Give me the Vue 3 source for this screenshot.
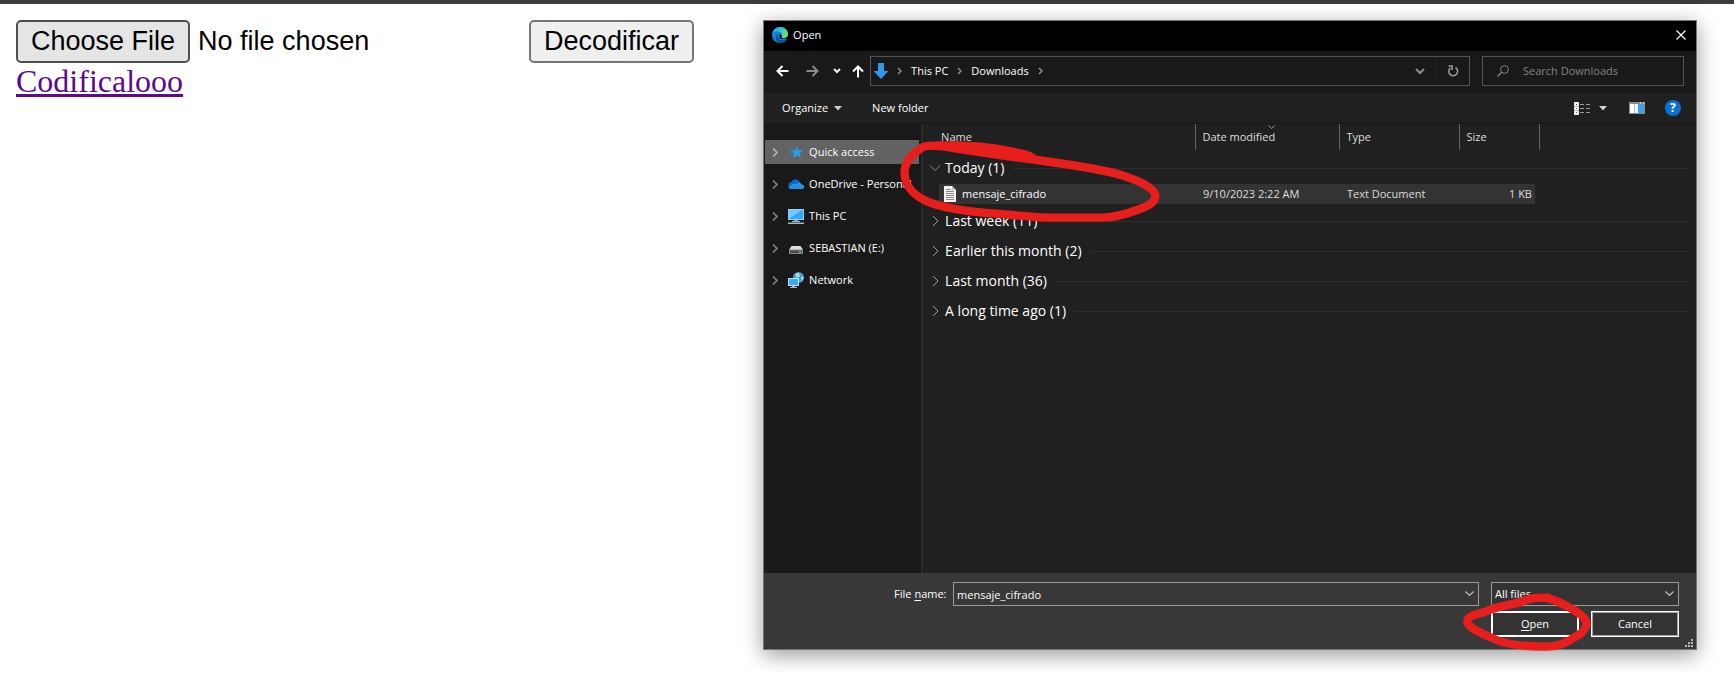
<script setup>
import { ref } from 'vue'

const fileName = ref('mensaje_cifrado')
const fileType = ref('All files')
const search = ref('')

const places = [
  { name: 'Quick access', icon: 'star', active: true },
  { name: 'OneDrive - Personal', icon: 'cloud' },
  { name: 'This PC', icon: 'pc' },
  { name: 'SEBASTIAN (E:)', icon: 'drive' },
  { name: 'Network', icon: 'network' }
]

const groups = [
  {
    name: 'Today (1)',
    open: true,
    files: [{ name: 'mensaje_cifrado', date: '9/10/2023 2:22 AM', type: 'Text Document', size: '1 KB' }]
  },
  { name: 'Last week (11)', files: [] },
  { name: 'Earlier this month (2)', files: [] },
  { name: 'Last month (36)', files: [] },
  { name: 'A long time ago (1)', files: [] }
]
</script>

<template>
  <div class="page">
    <div class="topbar"></div>
    <main class="content">
      <section class="decoder">
        <div class="controls">
          <input class="picker" type="file" aria-label="Archivo cifrado" />
          <button class="decode" type="button">Decodificar</button>
        </div>
        <a class="link" href="#">Codificalooo</a>
      </section>

      <section class="dialog" role="dialog" aria-label="Open">
        <header class="titlebar">
          <svg class="edge" viewBox="0 0 16 16" width="16" height="16">
            <defs>
              <linearGradient id="edgeTop" x1="0" y1="0" x2="1" y2="0.5">
                <stop offset="0" stop-color="#1c9fe0" />
                <stop offset="0.5" stop-color="#2fc3d6" />
                <stop offset="1" stop-color="#6be45a" />
              </linearGradient>
            </defs>
            <path d="M0 8C0 3 4 0 8 0C13 0 16 3.600 16 7.200C16 9.500 14.500 10.800 12.500 11L14.800 12.500C13.300 14.800 11 16 8.300 16C3.500 16 0 12.500 0 8Z" fill="#1183d8" />
            <path d="M0.300 6.500C1.300 2.600 4.300 0 8.200 0C13 0 16 3.600 16 7.200C16 9.800 14 11 12 11C10.200 11 9.300 10.500 9.600 9.900C11 8 9.500 4.800 6.500 4.400C4 4 1.300 4.900 0.300 6.500Z" fill="url(#edgeTop)" />
            <path d="M6.500 6.500C4.800 9 6 12.800 9.800 13.200C12 13.400 13.800 12.800 15 12.200C13.600 14.800 11 16 8.300 16C5 15.500 3.300 12 4.300 9.500C4.800 8 5.400 7 6.500 6.500Z" fill="#0b509f" />
            <path d="M8.200 7.500C7.300 7.800 6.900 9 7.500 10.200C8.500 12.200 11.500 12.500 14 11.200C12 11.500 9.200 11.200 9.500 9.900C10 9 9.500 7.800 8.200 7.500Z" fill="#000" />
          </svg>
          <h1>Open</h1>
          <button class="plain close" type="button" aria-label="Close">
            <svg viewBox="0 0 10 10" width="10" height="10"><path d="M0.500 0.500L9.500 9.500M9.500 0.500L0.500 9.500" stroke="#fff" stroke-width="1.200" /></svg>
          </button>
        </header>

        <nav class="navbar">
          <div class="arrows">
            <button class="plain" type="button" aria-label="Back">
              <svg viewBox="0 0 13 12" width="13" height="12"><path d="M12.500 6H1.500M6.500 1L1.500 6L6.500 11" fill="none" stroke="#fff" stroke-width="2" /></svg>
            </button>
            <button class="plain" type="button" aria-label="Forward">
              <svg viewBox="0 0 13 12" width="13" height="12"><path d="M0.500 6H11.500M6.500 1L11.500 6L6.500 11" fill="none" stroke="#8a8a8a" stroke-width="2" /></svg>
            </button>
            <button class="plain recent" type="button" aria-label="Recent locations">
              <svg viewBox="0 0 8 6" width="8" height="6"><path d="M1 1L4 4L7 1" fill="none" stroke="#f0f0f0" stroke-width="2" /></svg>
            </button>
            <button class="plain" type="button" aria-label="Up">
              <svg viewBox="0 0 12 13" width="12" height="13"><path d="M6 12.500V1.500M1 6.500L6 1.500L11 6.500" fill="none" stroke="#fff" stroke-width="2" /></svg>
            </button>
          </div>
          <div class="address">
            <svg class="down" viewBox="0 0 16 16" width="16" height="16"><path d="M5 0H11V8H15.500L8 16L0.500 8H5Z" fill="#3595e8" /></svg>
            <svg class="sep" viewBox="0 0 5 8" width="5" height="8"><path d="M1 1L4 4L1 7" fill="none" stroke="#8c8c8c" stroke-width="1.500" /></svg>
            <a href="#">This PC</a>
            <svg class="sep" viewBox="0 0 5 8" width="5" height="8"><path d="M1 1L4 4L1 7" fill="none" stroke="#8c8c8c" stroke-width="1.500" /></svg>
            <a href="#">Downloads</a>
            <svg class="sep" viewBox="0 0 5 8" width="5" height="8"><path d="M1 1L4 4L1 7" fill="none" stroke="#8c8c8c" stroke-width="1.500" /></svg>
            <button class="plain history" type="button" aria-label="Previous locations">
              <svg viewBox="0 0 10 7" width="10" height="7"><path d="M1 1L5 5L9 1" fill="none" stroke="#8c8c8c" stroke-width="2" /></svg>
            </button>
            <button class="plain refresh" type="button" aria-label="Refresh">
              <svg viewBox="0 0 12 12" width="12" height="12"><path d="M8.500 2.500A4.400 4.400 0 1 1 3.200 3.100M1.500 1H5V5" fill="none" stroke="#9a9a9a" stroke-width="1.600" /></svg>
            </button>
          </div>
          <label class="search">
            <svg viewBox="0 0 12 12" width="12" height="12"><circle cx="7.500" cy="4.500" r="3.900" fill="none" stroke="#848484" /><path d="M4.700 7.300L0.500 11.500" stroke="#848484" stroke-width="1.300" /></svg>
            <input v-model="search" type="text" placeholder="Search Downloads" aria-label="Search Downloads" />
          </label>
        </nav>

        <div class="toolbar">
          <button class="plain organize" type="button">
            Organize
            <svg viewBox="0 0 8 5" width="8" height="5"><path d="M0 0H8L4 4.500Z" fill="#d0d0d0" /></svg>
          </button>
          <button class="plain" type="button">New folder</button>
          <div class="tools">
            <button class="plain view" type="button" aria-label="Change your view">
              <svg viewBox="0 0 16 13" width="16" height="13">
                <path d="M0 0H5V13H0Z" fill="#e6e6e6" />
                <path d="M1 1H4V4H1ZM1 5H4V8H1ZM1 9H4V12H1Z" fill="#fff" />
                <path d="M0 4.500H5M0 8.500H5" stroke="#999" stroke-width="0.600" />
                <rect x="2" y="2" width="1" height="1" fill="#333" /><rect x="2" y="6" width="1" height="1" fill="#2b78d0" /><rect x="2" y="10" width="1" height="1" fill="#d02020" />
                <path d="M6 2.500H10M12 2.500H16M6 6.500H10M12 6.500H16M6 10.500H10M12 10.500H16" stroke="#9a9a9a" />
              </svg>
            </button>
            <button class="plain more" type="button" aria-label="More view options">
              <svg viewBox="0 0 8 5" width="8" height="5"><path d="M0 0H8L4 4.500Z" fill="#d0d0d0" /></svg>
            </button>
            <button class="plain preview" type="button" aria-label="Show the preview pane">
              <svg viewBox="0 0 16 12" width="16" height="12"><path d="M0 0H16V12H0Z" fill="#858d94" /><path d="M1 2H5V11H1Z" fill="#fff" /><path d="M5.500 2H9V11H5.500Z" fill="#eef4fa" /><path d="M9 2H15V11H9Z" fill="#3f9fe8" /><path d="M11 1H12M14 1H15" stroke="#fff" /></svg>
            </button>
            <button class="plain" type="button" aria-label="Get help">
              <span class="help">?</span>
            </button>
          </div>
        </div>

        <div class="body">
          <ul class="places">
            <li v-for="place in places" :key="place.name">
              <a href="#" :class="{ active: place.active }">
                <svg class="twist" viewBox="0 0 6 9" width="6" height="9"><path d="M1 0.500L5 4.500L1 8.500" fill="none" stroke="currentColor" stroke-width="1.700" /></svg>
                <svg v-if="place.icon === 'star'" viewBox="0 0 16 16" width="16" height="16"><path d="M9 2L10.600 6.200L15 6.400L11.600 9.200L12.800 13.600L9 11.200L5 14L6.200 9.400L3 6.600L7.400 6.200Z" fill="#28a0f0" /><path d="M2 5H7M1 8H5M2 11H5M3 13H5" stroke="#2389d2" stroke-width="0.800" /></svg>
                <svg v-else-if="place.icon === 'cloud'" viewBox="0 0 16 16" width="16" height="16"><path d="M2 12C-1 10 0.500 6 3.500 6C5 2.500 10 2.300 12 6.500L10 12Z" fill="#0c69c6" /><path d="M9 8C11 5.800 13 6.500 13.500 8.500C17 8.500 16.800 13 13.500 13H4C2 13 1 12 0.700 11L6 7.500Z" fill="#28a0ee" /><path d="M0.700 11L9 8L15.500 12C15 12.700 14.500 13 13.500 13H4C2 13 1 12 0.700 11Z" fill="#1f90e4" /></svg>
                <svg v-else-if="place.icon === 'pc'" viewBox="0 0 16 16" width="16" height="16"><path d="M0 1H16V12H0Z" fill="#8ed3fb" /><path d="M1 2H15V11H1Z" fill="#35a5f5" /><path d="M1 11V2H14Z" fill="#72c6fd" /><path d="M6 12H10V13.500H6Z" fill="#8795a0" /><path d="M4 13H12V14H4ZM0 14.500H16V16H0Z" fill="#a9b7c1" /></svg>
                <svg v-else-if="place.icon === 'drive'" viewBox="0 0 16 16" width="16" height="16"><path d="M3.500 6H12.500L15 10H1Z" fill="#dedede" /><path d="M1 9.500H15V14H1Z" fill="#8b8b8b" /><path d="M2 10.500H14V13H2Z" fill="#4b4b4b" /><path d="M11 11H13V12.500H11Z" fill="#38e838" /></svg>
                <svg v-else viewBox="0 0 16 16" width="16" height="16"><circle cx="10.500" cy="5.500" r="5.500" fill="#4d9cc4" /><path d="M7 2L11 1L12 4L9 6ZM13 5L16 5L14 9Z" fill="#a9dcef" /><path d="M0 6H11V14H0Z" fill="#b5e2fc" /><path d="M1 7H10V13H1Z" fill="#3aaaf6" /><path d="M4 14H7V15H9V16H2V15H4Z" fill="#a9b7c1" /></svg>
                <span>{{ place.name }}</span>
              </a>
            </li>
          </ul>

          <div class="listing">
            <table>
              <colgroup>
                <col />
                <col class="c-date" />
                <col class="c-type" />
                <col class="c-size" />
                <col class="c-rest" />
              </colgroup>
              <thead>
                <tr>
                  <th class="first">Name</th>
                  <th class="sorted">
                    Date modified
                    <svg class="sort" viewBox="0 0 7 4" width="7" height="4"><path d="M0.500 0.500L3.500 3.500L6.500 0.500" fill="none" stroke="#9a9a9a" /></svg>
                  </th>
                  <th>Type</th>
                  <th>Size</th>
                  <td></td>
                </tr>
              </thead>
              <tbody v-for="group in groups" :key="group.name">
                <tr>
                  <th colspan="5" class="group">
                    <div class="grouphead">
                      <svg v-if="group.open" viewBox="0 0 12 12" width="12" height="12"><path d="M1 3.500L6 8.500L11 3.500" fill="none" stroke="#8a8a8a" /></svg>
                      <svg v-else viewBox="0 0 12 12" width="12" height="12"><path d="M4 1L9 6L4 11" fill="none" stroke="#a0a0a0" /></svg>
                      <span>{{ group.name }}</span>
                      <i class="rule"></i>
                    </div>
                  </th>
                </tr>
                <tr v-for="file in group.files" :key="file.name" class="file">
                  <td>
                    <div class="cell namecell">
                      <svg viewBox="0 0 12 16" width="12" height="16"><path d="M0 0H8L12 4V16H0Z" fill="#f2f2f2" /><path d="M8 0V4H12Z" fill="#bdbdbd" /><path d="M2 3.500H7M2 5.500H10M2 7.500H10M2 9.500H10M2 11.500H10M2 13.500H10" stroke="#8a8a8a" /></svg>
                      {{ file.name }}
                    </div>
                  </td>
                  <td><div class="cell">{{ file.date }}</div></td>
                  <td><div class="cell">{{ file.type }}</div></td>
                  <td><div class="cell sizecell">{{ file.size }}</div></td>
                  <td></td>
                </tr>
              </tbody>
            </table>
            <svg class="mark markfile" viewBox="0 0 960 645" width="320" height="215" aria-hidden="true">
              <path d="M150 93C125 91 108 91 97 97C62 120 40 147 44 180C47 218 78 246 118 262C170 282 250 291 320 296C380 301 420 306 470 308H640C680 307 715 295 750 282C785 270 797 255 796 242C794 220 750 198 700 182C650 166 550 150 440 135C360 126 260 110 150 93Z" fill="none" stroke="#e81e1c" stroke-width="25" stroke-linejoin="round" />
              <path d="M140 79C240 77 300 84 350 94C390 102 425 107 438 120C440 138 420 142 380 136L140 103Z" fill="#e81e1c" />
            </svg>
          </div>
        </div>

        <footer class="footer">
          <label class="namelabel" for="filename">File <u>n</u>ame:</label>
          <div class="field">
            <input id="filename" v-model="fileName" type="text" />
            <svg viewBox="0 0 9 6" width="9" height="6"><path d="M0.500 0.500L4.500 4.500L8.500 0.500" fill="none" stroke="#c0c0c0" stroke-width="1.200" /></svg>
          </div>
          <div class="choices">
            <div class="field type">
              <select v-model="fileType" aria-label="File type">
                <option>All files</option>
              </select>
              <svg viewBox="0 0 9 6" width="9" height="6"><path d="M0.500 0.500L4.500 4.500L8.500 0.500" fill="none" stroke="#c0c0c0" stroke-width="1.200" /></svg>
            </div>
            <div class="actions">
              <button class="action primary" type="button"><span><u>O</u>pen</span></button>
              <button class="action" type="button">Cancel</button>
            </div>
          </div>
          <svg class="grip" viewBox="0 0 8 8" width="8" height="8"><path d="M6 0H8V2H6ZM3 3H5V5H3ZM6 3H8V5H6ZM0 6H2V8H0ZM3 6H5V8H3ZM6 6H8V8H6Z" fill="#b8b8b8" /></svg>
          <svg class="mark markopen" viewBox="0 0 882 339" width="294" height="113" aria-hidden="true">
            <path d="M325 113C280 113 265 116 240 127C195 138 165 140 140 154C115 163 82 166 82 184C84 207 130 220 160 236C190 252 240 259 310 260C370 261 390 240 425 218C438 205 442 192 438 182C430 165 400 150 380 138C355 125 340 117 315 113Z" fill="none" stroke="#e81e1c" stroke-width="25" stroke-linejoin="round" />
          </svg>
        </footer>
      </section>
    </main>
  </div>
</template>

<style>
body {
  margin: 0;
  background: #fff;
}
</style>

<style scoped>
* {
  box-sizing: border-box;
}
.page {
  min-height: 100vh;
  display: flex;
  flex-direction: column;
  overflow: hidden;
}
.topbar {
  height: 4px;
  background: #3c3c3c;
}
.content {
  flex: 1;
  display: grid;
  grid-template-columns: minmax(0, 4fr) minmax(0, 5fr);
  padding: 16px 37px 23px 16px;
}
.controls {
  display: flex;
  gap: 8px;
  height: 43px;
}
.picker {
  width: 505px;
  font: 27px "Liberation Sans", Arial, sans-serif;
  color: #000;
}
.picker::file-selector-button,
.decode {
  height: 43px;
  padding: 0 13px;
  border: 2px solid #767676;
  border-radius: 5px;
  background: #efefef;
  color: #000;
  font: 27px "Liberation Sans", Arial, sans-serif;
}
.picker::file-selector-button {
  margin-right: 8px;
  border-color: #4f4f4f;
  background: #e5e5e5;
}
.link {
  color: #5a0a8c;
  font: 32px/37px "Liberation Serif", "Times New Roman", serif;
  text-decoration-thickness: 3px;
}
.dialog {
  display: flex;
  flex-direction: column;
  border: 1px solid #777;
  background: #191919;
  color: #fff;
  font: 11px/16px "Open Sans", "Noto Sans", sans-serif;
  box-shadow: 0 5px 20px rgba(0, 0, 0, 0.4);
}
.dialog a {
  color: inherit;
  text-decoration: none;
}
.dialog input,
.dialog select,
.dialog button {
  font: inherit;
  color: inherit;
}
.plain {
  display: flex;
  align-items: center;
  justify-content: center;
  padding: 0;
  border: 0;
  background: none;
}
.titlebar {
  display: flex;
  align-items: center;
  gap: 5px;
  height: 30px;
  padding: 0 10px 2px 8px;
  background: #000;
}
.titlebar h1 {
  margin: 0;
  font: inherit;
}
.close {
  margin-left: auto;
}
.navbar {
  display: flex;
  align-items: center;
  height: 42px;
  padding: 0 12px 2px;
}
.arrows {
  display: flex;
  justify-content: space-between;
  width: 88px;
}
.recent {
  margin: 0 -6px 0 -4px;
}
.address {
  flex: 1;
  display: flex;
  align-items: center;
  height: 30px;
  margin: 0 12px 0 6px;
  padding-left: 2px;
  border: 1px solid #535353;
}
.sep {
  margin: 0 9px;
}
.down + .sep {
  margin-left: 8px;
}
.history {
  width: 32px;
  height: 28px;
  margin-left: auto;
  border-right: 1px solid #202020;
}
.refresh {
  width: 32px;
  height: 28px;
}
.search {
  display: flex;
  align-items: center;
  gap: 14px;
  width: 202px;
  height: 30px;
  padding-left: 14px;
  border: 1px solid #535353;
}
.search input {
  flex: 1;
  min-width: 0;
  padding: 0;
  border: 0;
  background: none;
  outline: none;
}
.search input::placeholder {
  color: #848484;
}
.toolbar {
  display: flex;
  align-items: center;
  gap: 30px;
  height: 30px;
  padding: 0 15px 0 18px;
  background: #202020;
}
.organize {
  gap: 6px;
}
.tools {
  display: flex;
  align-items: center;
  margin-left: auto;
}
.more {
  margin: 0 22px 0 9px;
}
.preview {
  margin-right: 20px;
}
.help {
  width: 16px;
  height: 16px;
  border-radius: 50%;
  background: #0b6fd6;
  font-size: 12px;
  font-weight: 700;
  text-align: center;
}
.body {
  flex: 1;
  display: flex;
  border-top: 1px solid #151515;
}
.places {
  width: 159px;
  margin: 0;
  padding: 16px 2px 0 1px;
  border-right: 2px solid #2b2b2b;
  list-style: none;
}
.places li {
  margin-bottom: 8px;
}
.places a {
  display: flex;
  align-items: center;
  gap: 5px;
  height: 24px;
  padding-left: 7px;
  white-space: nowrap;
}
.places svg {
  flex: none;
}
.places .active {
  background: #636363;
}
.twist {
  margin-right: 5px;
  color: #7d7d7d;
}
.active .twist {
  color: #b5b5b5;
}
.listing {
  position: relative;
  flex: 1;
  background: #202020;
}
table {
  width: 100%;
  table-layout: fixed;
  border-collapse: collapse;
}
.c-date {
  width: 144px;
}
.c-type {
  width: 120px;
}
.c-size {
  width: 80px;
}
.c-rest {
  width: 156px;
}
th,
td {
  padding: 0;
  font-weight: 400;
  text-align: left;
}
thead th {
  position: relative;
  height: 26px;
  padding-left: 6px;
  border-right: 1px solid #636363;
  color: #dedede;
}
thead .first {
  padding-left: 18px;
}
.sort {
  position: absolute;
  top: 1px;
  left: 50%;
}
tbody .group {
  height: 30px;
}
thead + tbody .group {
  height: 34px;
  padding-top: 2px;
}
.grouphead {
  display: flex;
  align-items: center;
  gap: 4px;
  padding: 0 6px;
  font-size: 14px;
  line-height: 20px;
}
.rule {
  flex: 1;
  height: 1px;
  margin-left: 4px;
  background: #2e2e2e;
}
.file td {
  height: 22px;
  vertical-align: top;
}
.cell {
  display: flex;
  align-items: center;
  height: 20px;
  padding-left: 7px;
  background: #333;
  color: #dedede;
}
.namecell {
  gap: 6px;
  margin-left: 16px;
  padding-left: 5px;
  color: #fff;
}
.sizecell {
  justify-content: flex-end;
  margin-right: 5px;
  padding-right: 3px;
}
.mark {
  position: absolute;
  pointer-events: none;
}
.markfile {
  top: -9px;
  left: -33px;
}
.footer {
  position: relative;
  display: flex;
  align-items: flex-start;
  height: 76px;
  padding: 9px 17px 0 130px;
  background: #383838;
}
.namelabel {
  width: 53px;
  margin: 4px 6px 0 0;
  white-space: nowrap;
}
u {
  text-underline-offset: 2px;
}
.field {
  flex: 1;
  display: grid;
  grid-template-columns: 1fr 16px;
  align-items: center;
  height: 24px;
  border: 1px solid #9b9b9b;
}
.field input,
.field select {
  grid-area: 1 / 1 / 2 / 3;
  width: 100%;
  height: 22px;
  padding: 0 24px 0 3px;
  border: 0;
  border-radius: 0;
  background: none;
  appearance: none;
  outline: none;
}
.field svg {
  grid-area: 1 / 2;
  justify-self: center;
  pointer-events: none;
}
.choices {
  width: 188px;
  margin-left: 12px;
}
.type {
  background: #333;
}
.actions {
  display: grid;
  grid-template-columns: 1fr 1fr;
  gap: 12px;
  margin-top: 5px;
}
.action {
  height: 26px;
  padding: 0;
  border: 1px solid #fff;
  box-shadow: inset 0 0 0 1px #a0a0a0;
  background: #333;
}
.primary {
  border-width: 2px;
  box-shadow: none;
}
.grip {
  position: absolute;
  right: 3px;
  bottom: 2px;
}
.markopen {
  top: -13px;
  right: -38px;
}
</style>
